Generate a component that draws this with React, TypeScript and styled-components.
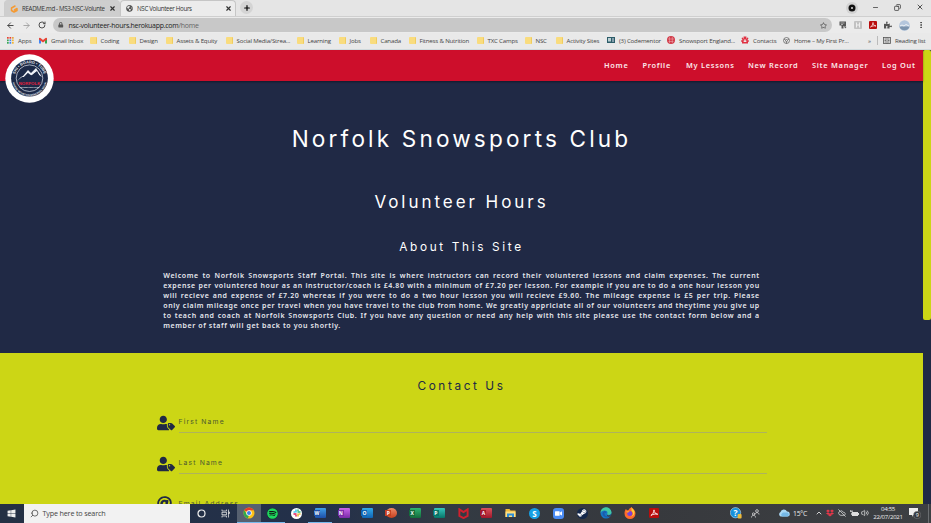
import React from 'react';
import styled, { createGlobalStyle } from 'styled-components';
import {
  FaUserTag, FaAt, FaWindows, FaSteamSymbol, FaRegStar, FaPuzzlePiece, FaLock,
  FaDropbox, FaVideo, FaGlobeAmericas, FaSpotify,
} from 'react-icons/fa';
import {
  ArrowLeft, ArrowRight, RotateCw, X, Plus, Minus, Search, ChevronUp, Volume2, CloudOff, EllipsisVertical, Copy,
} from 'lucide-react';

const navy = '#202945';
const red = '#cd0e2b';
const lime = '#ccd615';

const Global = createGlobalStyle`
  * { box-sizing: border-box; }
  body { margin: 0; overflow: hidden; }
  svg { display: block; flex: none; }
`;

const Screen = styled.div`
  width: 931px;
  height: 523px;
  display: flex;
  flex-direction: column;
  overflow: hidden;
  font-family: 'Open Sans', 'Noto Sans', sans-serif;
`;

/* ---------- Browser frame ---------- */
const TabStrip = styled.div`
  height: 17px;
  flex: none;
  display: flex;
  align-items: flex-end;
  padding-left: 4px;
  background: #e5e5e5;
  border-bottom: 1px solid #cfcfcf;
`;
const Tab = styled.div<{ $active?: boolean }>`
  width: 116px;
  height: 16px;
  display: flex;
  align-items: center;
  gap: 4px;
  padding: 0 3px 0 5px;
  border-radius: 4px 4px 0 0;
  border: 1px solid ${p => (p.$active ? '#c6c6c6' : '#cdcdcd')};
  border-bottom: 0;
  background: ${p => (p.$active ? '#ececec' : '#cecece')};
  color: #333;
`;
const TabTitle = styled.span`
  flex: 1;
  font-size: 6.2px;
  letter-spacing: -0.33px;
  white-space: nowrap;
  overflow: hidden;
`;
const NewTab = styled.div`
  width: 13px;
  height: 13px;
  margin: 0 0 2px 4px;
  border-radius: 50%;
  background: #d4d4d4;
  display: grid;
  place-items: center;
`;
const WindowControls = styled.div`
  margin-left: auto;
  height: 16px;
  display: flex;
  align-items: center;
  padding: 0 7px 2px 0;
  gap: 15px;
  color: #333;
`;
const Recorder = styled.div`
  width: 12px;
  height: 12px;
  border-radius: 50%;
  background: #d2d2d2;
  display: grid;
  place-items: center;
  margin-right: -1px;
  margin-top: 2px;
`;
const Toolbar = styled.div`
  height: 16px;
  flex: none;
  display: flex;
  align-items: center;
  background: #ebebeb;
  padding: 0 6px 0 6px;
  color: #444;
`;
const NavButtons = styled.div`
  display: flex;
  gap: 7px;
  width: 47px;
`;
const AddressBar = styled.div`
  width: 779px;
  height: 14px;
  border-radius: 7px;
  background: #c8c8c8;
  display: flex;
  align-items: center;
  padding: 0 5px 0 5px;
  gap: 5px;
  font-size: 7px;
  color: #222;
`;
const Url = styled.span`
  flex: 1;
  letter-spacing: -0.28px;
  em { font-style: normal; color: #666; }
`;
const Extensions = styled.div`
  flex: 1;
  display: flex;
  align-items: center;
  justify-content: space-between;
  padding-left: 7px;
`;
const Bookmarks = styled.div`
  height: 17px;
  flex: none;
  display: flex;
  align-items: center;
  padding: 0 0 1.5px 7px;
  background: #e9e9e9;
  border-bottom: 1px solid #d0dadd;
`;
const Bookmark = styled.div<{ $w: number }>`
  width: ${p => p.$w}px;
  flex: none;
  display: flex;
  align-items: center;
  gap: 4px;
  font-size: 6.1px;
  letter-spacing: -0.18px;
  color: #444;
  white-space: nowrap;
`;
const Folder = styled.i`
  width: 6.5px;
  height: 7px;
  border-radius: 1px;
  background: #f9dc7e;
  border-right: 1px solid #f0cc5e;
`;
const Divider = styled.i`
  width: 1px;
  height: 9px;
  background: #bbb;
  margin-right: 5px;
`;

/* ---------- Web page ---------- */
const Viewport = styled.div`
  height: 453.5px;
  flex: none;
  display: flex;
  overflow: hidden;
`;
const Page = styled.main`
  width: 923px;
  display: flex;
  flex-direction: column;
`;
const Scrollbar = styled.div`
  width: 8px;
  background: ${navy};
`;
const Thumb = styled.div`
  height: 270px;
  border-radius: 2px;
  background: ${lime};
`;
const Header = styled.header`
  position: relative;
  height: 31px;
  flex: none;
  background: ${red};
  box-shadow: 0 1px 2px rgba(0, 0, 0, 0.4);
`;
const Badge = styled.div`
  position: absolute;
  left: 4.5px;
  top: 4px;
`;
const Menu = styled.nav`
  height: 30px;
  display: flex;
  align-items: center;
  padding-left: 604px;
  font-family: 'Noto Sans', sans-serif;
  font-weight: 600;
  font-size: 7.4px;
  letter-spacing: 0.72px;
  color: #fbe9ec;
`;
const MenuItem = styled.a<{ $w: number }>`
  width: ${p => p.$w}px;
  flex: none;
  white-space: nowrap;
`;
const Hero = styled.section`
  height: 272.3px;
  flex: none;
  background: ${navy};
  color: #fff;
  display: flex;
  flex-direction: column;
  align-items: center;
`;
const Heading = styled.h1<{ $size: number; $ls: number; $h: number; $top?: number }>`
  margin: ${p => p.$top ?? 0}px 0 0;
  height: ${p => p.$h}px;
  flex: none;
  line-height: ${p => p.$h}px;
  font-family: Inter, sans-serif;
  font-weight: 400;
  font-size: ${p => p.$size}px;
  letter-spacing: ${p => p.$ls}px;
  white-space: nowrap;
`;
const About = styled.div`
  width: 596.5px;
  margin-top: 14px;
  font-family: 'Noto Sans', sans-serif;
  font-size: 7px;
  font-weight: 600;
  letter-spacing: 0.6px;
  color: #e6e8ee;
`;
const Line = styled.div<{ $last?: boolean }>`
  height: 10.2px;
  line-height: 10.2px;
  white-space: nowrap;
  text-align: justify;
  text-align-last: ${p => (p.$last ? 'left' : 'justify')};
`;
const Contact = styled.section`
  flex: 1;
  background: ${lime};
  color: ${navy};
  display: flex;
  flex-direction: column;
  align-items: center;
`;
const Fields = styled.form`
  margin: 13.2px 0 0;
`;
const Field = styled.label`
  width: 610px;
  height: 40.7px;
  display: flex;
  gap: 4px;
`;
const FieldIcon = styled.span`
  width: 18px;
  padding-top: 5px;
`;
const FieldInput = styled.span`
  flex: 1;
  height: 24px;
  line-height: 25px;
  border-bottom: 1px solid #aeb35c;
  font-family: Inter, sans-serif;
  font-size: 6.8px;
  letter-spacing: 1.15px;
  color: #4d5a30;
`;

/* ---------- Taskbar ---------- */
const Taskbar = styled.footer`
  flex: 1;
  display: flex;
  align-items: stretch;
  background: linear-gradient(90deg, #243044, #23304a 35%, #333a43 48%, #37393d 70%, #3d4043);
  color: #eee;
`;
const Start = styled.div`
  width: 23.5px;
  display: grid;
  place-items: center;
`;
const SearchBox = styled.div`
  width: 166px;
  background: #f2f2f2;
  color: #444;
  display: flex;
  align-items: center;
  gap: 4px;
  padding-left: 6px;
  font-size: 7.2px;
  letter-spacing: -0.17px;
`;
const TaskButton = styled.div<{ $open?: boolean; $focus?: boolean }>`
  width: 23.8px;
  flex: none;
  display: grid;
  place-items: center;
  background: ${p => (p.$focus ? '#566070' : 'transparent')};
  box-shadow: ${p => (p.$open ? 'inset 0 -1px 0 #76b9ed' : 'none')};
`;
const OfficeTile = styled.div<{ $c: string; $d: string; $round?: boolean }>`
  width: 11px;
  height: 10px;
  border-radius: ${p => (p.$round ? '50%' : '1px')};
  background: linear-gradient(180deg, ${p => p.$c}, ${p => p.$d});
  display: flex;
  align-items: center;
`;
const OfficeLetter = styled.span<{ $d: string }>`
  width: 6px;
  height: 6px;
  margin-left: -1px;
  background: ${p => p.$d};
  color: #fff;
  font-size: 5px;
  font-weight: 700;
  line-height: 6px;
  text-align: center;
`;
const Disc = styled.div<{ $bg: string; $r?: string }>`
  width: 11px;
  height: 11px;
  border-radius: ${p => p.$r ?? '50%'};
  background: ${p => p.$bg};
  display: grid;
  place-items: center;
  color: #fff;
  font-size: 8px;
  font-weight: 700;
  line-height: 11px;
`;
const Tray = styled.div`
  margin-left: auto;
  display: flex;
  align-items: center;
  width: 202px;
`;
const TrayItem = styled.div<{ $w: number; $ml?: number }>`
  width: ${p => p.$w}px;
  margin-left: ${p => p.$ml ?? 0}px;
  flex: none;
  display: grid;
  place-items: center;
  font-size: 6.8px;
  letter-spacing: -0.2px;
`;
const Clock = styled.div`
  width: 36px;
  display: flex;
  flex-direction: column;
  align-items: center;
  font-size: 6.1px;
  line-height: 8.6px;
  letter-spacing: -0.28px;
`;
const ShowDesktop = styled.i`
  width: 1px;
  height: 100%;
  background: #6b6e71;
  margin-left: 4px;
`;

const ClubLogo = () => (
  <svg width="49" height="49" viewBox="0 0 49 49">
    <defs>
      <path id="arcTop" d="M9.6 24.2a14.9 14.9 0 0 1 29.8 0" />
      <path id="arcBottom" d="M7.3 25.2a17.2 16.8 0 0 0 34.4 0" />
    </defs>
    <circle cx="24.5" cy="24.5" r="24.2" fill="#fff" />
    <circle cx="24.5" cy="24.2" r="18.4" fill="#1d2a48" />
    <circle cx="24.5" cy="24.2" r="13.3" fill="none" stroke="#c8cfda" strokeWidth=".8" />
    <g fill="#e8ebf0" fontFamily="Liberation Sans, sans-serif" fontWeight="700">
      <text fontSize="3.9"><textPath href="#arcTop" startOffset="50%" textAnchor="middle">SKI • BOARD • TUBE</textPath></text>
      <text fontSize="2.5"><textPath href="#arcBottom" startOffset="50%" textAnchor="middle">WHERE MOUNTAIN MEMORIES BEGIN</textPath></text>
      <text x="24.5" y="33.6" fontSize="1.9" textAnchor="middle">SNOWSPORTS CLUB</text>
    </g>
    <path d="M12 27l4-4 2-1 5-6 3 3 5-5 6 9-3-2-2-3-2 1-3 3-4-3-4 4-2 0z" fill="#eef1f6" />
    <path d="M18 24l5-5 1 3 3-1 5-4 3 6z" fill="#1d2a48" />
    <text x="24.5" y="31" fontSize="4.4" fontWeight="700" fill="#e0203c" textAnchor="middle" fontFamily="Liberation Sans, sans-serif">NORFOLK</text>
  </svg>
);

const GitpodIcon = () => (
  <svg width="8" height="8" viewBox="0 0 16 16" fill="none" stroke="#f59a32" strokeWidth="3" strokeLinejoin="round" strokeLinecap="round">
    <path d="M10 2L3 6v5l5 3 6-3V7L9 10" />
  </svg>
);
const AppsGrid = () => (
  <svg width="7" height="7" viewBox="0 0 7 7">
    {['#e54335', '#e54335', '#e8a23a', '#34a853', '#4285f4', '#f2b632', '#34a853', '#4285f4', '#f2b632'].map((c, i) => (
      <rect key={i} x={(i % 3) * 2.5} y={Math.floor(i / 3) * 2.5} width="1.7" height="1.7" fill={c} />
    ))}
  </svg>
);
const Gmail = () => (
  <svg width="8" height="7" viewBox="0 0 16 12">
    <path d="M0 1v11h4V5z" fill="#4285f4" /><path d="M16 1v11h-4V5z" fill="#34a853" />
    <path d="M0 1.5Q1-.5 3 1l5 4 5-4q2-1.5 3 .5V4L8 10 0 4z" fill="#ea4335" />
  </svg>
);
const CodementorIcon = () => (
  <svg width="8" height="6" viewBox="0 0 8 6"><rect width="8" height="6" fill="#2d5d69" /><rect x="1" y="1" width="3" height="3.5" fill="#bcd0d4" /><path d="M5 2h2M5 4h2" stroke="#dde" /></svg>
);
const EnglandIcon = () => (
  <svg width="8" height="8" viewBox="0 0 8 8"><circle cx="4" cy="4" r="4" fill="#d23a48" /><path d="M1 3h6M1.5 5.5h5M2.5 1v6M5.3 1v6" stroke="#f0b5ba" strokeWidth=".5" /></svg>
);
const ContactsIcon = () => (
  <svg width="8" height="8" viewBox="0 0 16 16" fill="#e03142">
    <path d="M5 1h3v6H6zM11 1H8v6h2zM1 4l3-1 3 6-3 1zM15 4l-3-1-3 6 3 1zM0 9l3-1 3 4H1zM16 9l-3-1-3 4h5z" />
    <path d="M2 12h12v3H2z" />
  </svg>
);
const HomeSiteIcon = () => (
  <svg width="7" height="7" viewBox="0 0 14 14" fill="none" stroke="#666" strokeWidth="1.6"><circle cx="7" cy="7" r="6" /><circle cx="7" cy="7" r="2" /><path d="M2 4l3 2M12 4L9 6M7 9v4" /></svg>
);
const ReadingIcon = () => (
  <svg width="8" height="7" viewBox="0 0 16 14" fill="none" stroke="#555" strokeWidth="1.6"><rect x="1" y="1" width="14" height="12" /><path d="M8 1v12M3 4h3M3 7h3M3 10h3M10 4h3M10 7h3M10 10h3" /></svg>
);
const AcrobatIcon = ({ s }: { s: number }) => (
  <svg width={s} height={s} viewBox="0 0 16 16"><rect width="16" height="16" rx="2" fill="#b90d0d" /><path d="M3 12c2-1 5-5 5-9 0 4 2 6 6 7-4-1-8 0-11 2z" fill="none" stroke="#fff" strokeWidth="1.4" /></svg>
);
const ChromeIcon = () => (
  <svg width="12" height="12" viewBox="0 0 24 24">
    <circle cx="12" cy="12" r="11" fill="#fbc116" />
    <path d="M12 12L2.5 6.5A11 11 0 0 1 21.6 6.5H12z" fill="#e33b2e" />
    <path d="M2.5 6.5L8 15l4 2-2.5 5.8A11 11 0 0 1 2.5 6.5z" fill="#2da94f" />
    <circle cx="12" cy="12" r="5.4" fill="#fff" /><circle cx="12" cy="12" r="4.1" fill="#3f7ee8" />
  </svg>
);
const SlackIcon = () => (
  <svg width="8" height="8" viewBox="0 0 16 16" strokeWidth="3" strokeLinecap="round">
    <path d="M6 2v4M2 6h1" stroke="#36c5f0" /><path d="M10 6h4M10 2v1" stroke="#2eb67d" />
    <path d="M10 10v4M13 10h1" stroke="#ecb22e" /><path d="M2 10h4M6 13v1" stroke="#e01e5a" />
  </svg>
);
const TaskViewIcon = () => (
  <svg width="9" height="9" viewBox="0 0 18 18" fill="none" stroke="#e5e5e5" strokeWidth="1.5"><path d="M2 1v3h9V1M2 17v-3h9v3M15 1v16" /><rect x="2" y="6.5" width="9" height="5" /><path d="M14 6h3v3h-3" /></svg>
);
const McAfeeIcon = () => (
  <svg width="11" height="11" viewBox="0 0 16 16"><path d="M2 2l6 4 6-4v9.500l-6 3.200-6-3.200z" fill="none" stroke="#d0202e" strokeWidth="2.8" /></svg>
);
const ExplorerIcon = () => (
  <svg width="11" height="10" viewBox="0 0 22 20"><path d="M1 2h8l2 3h10v13H1z" fill="#f0b93c" /><path d="M1 7h20v11H1z" fill="#ffdf80" /><path d="M4 18v-7h14v7h-4v-3H8v3z" fill="#2f8fd8" /></svg>
);
const EdgeIcon = () => (
  <svg width="12" height="12" viewBox="0 0 24 24">
    <circle cx="12" cy="12" r="11" fill="#1677c5" />
    <path d="M1 12A11 11 0 0 1 23 11c0 5-8 6-9 3 3-4-1-7-5-7-4 0-7 2-8 5z" fill="#42c7a4" />
    <path d="M9 11c-1 5 3 9 10 8-5 4-14 1-14-6 0-2 2-4 4-5 3 0 4 2 3 4-1 0-2-1-3-1z" fill="#1d5ba8" />
    <path d="M14 15c2 3 6 2 9-1l-3 5c-4 1-7-1-6-4z" fill="#383a3f" />
  </svg>
);
const FirefoxIcon = () => (
  <svg width="12" height="12" viewBox="0 0 24 24">
    <path d="M12 2c3-1 2-2 3-2 1 3 8 5 8 13a11 11 0 0 1-22 0c0-4 1-7 3-9l2 3 3-1z" fill="#ff6a2b" />
    <path d="M15 0c1 4 6 5 6 11 0 5-4 8-8 8 7-2 6-8 2-11z" fill="#ffcf38" />
    <circle cx="11.5" cy="13" r="5" fill="#7a43d6" /><path d="M4 8c3-1 6 0 8 2-3 0-4 2-6 1z" fill="#ff9a2e" />
  </svg>
);
const HelpIcon = () => (
  <svg width="12" height="12" viewBox="0 0 12 12"><circle cx="5.5" cy="5.7" r="5.2" fill="#1991db" stroke="#d9edf8" strokeWidth=".5" /><text x="5.4" y="8.8" fontSize="8.5" fontWeight="700" fill="#fff" textAnchor="middle" fontFamily="Open Sans, sans-serif">?</text><rect x="7.6" y="7" width="4" height="4.6" rx="1" fill="#edbb3c" /></svg>
);
const PeopleIcon = () => (
  <svg width="9" height="9" viewBox="0 0 18 18" fill="none" stroke="#ddd" strokeWidth="1.5"><circle cx="12" cy="4" r="2.7" /><path d="M8 11c0-5 8-5 8 0" /><circle cx="5" cy="10" r="2.3" /><path d="M1 17c0-6 8-6 8 0" /></svg>
);
const WeatherIcon = () => (
  <svg width="12" height="8" viewBox="0 0 24 16"><path d="M5 15a5 5 0 0 1 0-9 7 7 0 0 1 13-1 5 5 0 0 1 1 10z" fill="#a9d8f5" /><path d="M8 15a5 5 0 0 1 2-8l9 0a4.500 4.500 0 0 1 0 8z" fill="#75b8e6" /></svg>
);
const BatteryIcon = () => (
  <svg width="9" height="7" viewBox="0 0 18 14"><path d="M4 4h12v2h2v4h-2v2H4z" fill="#ddd" /><path d="M1 0v3M4 0v3M0 3h5v3H3v4" stroke="#ddd" fill="none" strokeWidth="1.4" /></svg>
);
const NoticeIcon = () => (
  <svg width="12" height="12" viewBox="0 0 12 12"><path d="M0 1h9v7H4L3 10V8H0z" fill="#eee" /><circle cx="8.2" cy="8" r="3.7" fill="#34373b" stroke="#999" strokeWidth=".4" /><text x="8.2" y="10" fontSize="5.5" fill="#fff" textAnchor="middle" fontFamily="Open Sans, sans-serif">9</text></svg>
);
const NoteExtension = () => (
  <svg width="8" height="8" viewBox="0 0 16 16"><path d="M1 1h13v9H9v5H5V9H1z" fill="#555" /><path d="M3 4h8M4 7h4" stroke="#ddd" strokeWidth="1.3" /><path d="M10 9l5 3-3 3z" fill="#555" /></svg>
);
const HoneyExtension = () => (
  <svg width="8" height="8" viewBox="0 0 16 16"><rect width="16" height="16" rx="2" fill="#c2c2c2" /><path d="M5 3v10M5 8h6M11 3v10" stroke="#eee" strokeWidth="2" /></svg>
);
const Avatar = () => (
  <svg width="11" height="11" viewBox="0 0 11 11"><circle cx="5.5" cy="5.5" r="5.3" fill="#b4c6dc" /><path d="M.5 6.500h10a5.200 5.200 0 0 1-10 0z" fill="#7c94ae" /><path d="M1 6l2-1 2 1 2-1.500L10 6" stroke="#eef2f6" fill="none" /></svg>
);

const folders: [string, number][] = [
  ['Coding', 39], ['Design', 37], ['Assets & Equity', 60], ['Social Media/Strea...', 71], ['Learning', 42],
  ['Jobs', 31], ['Canada', 39], ['Fitness & Nutrition', 68], ['TXC Camps', 48], ['NSC', 31], ['Activity Sites', 51],
];
const menu: [string, number][] = [
  ['Home', 38.5], ['Profile', 43.5], ['My Lessons', 62], ['New Record', 64], ['Site Manager', 70], ['Log Out', 40],
];
const about = [
  'Welcome to Norfolk Snowsports Staff Portal. This site is where instructors can record their voluntered lessons and claim expenses. The current',
  'expense per voluntered hour as an instructor/coach is £4.80 with a minimum of £7.20 per lesson. For example if you are to do a one hour lesson you',
  'will recieve and expense of £7.20 whereas if you were to do a two hour lesson you will recieve £9.60. The mileage expense is £5 per trip. Please',
  'only claim mileage once per travel when you have travel to the club from home. We greatly appriciate all of our volunteers and theytime you give up',
  'to teach and coach at Norfolk Snowsports Club. If you have any question or need any help with this site please use the contact form below and a',
  'member of staff will get back to you shortly.',
];

const Office = ({ l, c, d, round }: { l: string; c: string; d: string; round?: boolean }) => (
  <TaskButton $open={l === 'W'}>
    <OfficeTile $c={c} $d={d} $round={round}><OfficeLetter $d={d}>{l}</OfficeLetter></OfficeTile>
  </TaskButton>
);

export default function App() {
  return (
    <Screen>
      <Global />
      <TabStrip>
        <Tab><GitpodIcon /><TabTitle>README.md - MS3-NSC-Volunte</TabTitle><X size={7} strokeWidth={4} /></Tab>
        <Tab $active><FaGlobeAmericas size={7} color="#555" /><TabTitle>NSC Volunteer Hours</TabTitle><X size={7} strokeWidth={4} /></Tab>
        <NewTab><Plus size={8} strokeWidth={3.5} /></NewTab>
        <WindowControls>
          <Recorder><svg width="8" height="8" viewBox="0 0 8 8"><circle cx="4" cy="4" r="3.5" fill="#111" /><circle cx="4" cy="4" r="1" fill="#ddd" /></svg></Recorder>
          <Minus size={7} strokeWidth={2.5} /><Copy size={7} strokeWidth={2.5} transform="scale(-1 1)" /><X size={8} strokeWidth={2.5} />
        </WindowControls>
      </TabStrip>
      <Toolbar>
        <NavButtons><ArrowLeft size={9} strokeWidth={2.6} /><ArrowRight size={9} strokeWidth={2.2} color="#999" /><RotateCw size={8} strokeWidth={2.8} /></NavButtons>
        <AddressBar><FaLock size={5.5} color="#555" /><Url>nsc-volunteer-hours.herokuapp.com<em>/home</em></Url><FaRegStar size={7} color="#555" /></AddressBar>
        <Extensions><NoteExtension /><HoneyExtension /><AcrobatIcon s={8} /><FaPuzzlePiece size={8} color="#555" /><Avatar /><EllipsisVertical size={8} strokeWidth={3} /></Extensions>
      </Toolbar>
      <Bookmarks>
        <Bookmark $w={32}><AppsGrid />Apps</Bookmark>
        <Bookmark $w={51}><Gmail />Gmail Inbox</Bookmark>
        {folders.map(([t, w]) => <Bookmark key={t} $w={w}><Folder />{t}</Bookmark>)}
        <Bookmark $w={60}><CodementorIcon />(3) Codementor</Bookmark>
        <Bookmark $w={74}><EnglandIcon />Snowsport England...</Bookmark>
        <Bookmark $w={42}><ContactsIcon />Contacts</Bookmark>
        <Bookmark $w={85}><HomeSiteIcon />Home – My First Pr...</Bookmark>
        <Bookmark $w={9}>»</Bookmark>
        <Divider />
        <Bookmark $w={45}><ReadingIcon />Reading list</Bookmark>
      </Bookmarks>

      <Viewport>
        <Page>
          <Header>
            <Menu>{menu.map(([t, w]) => <MenuItem key={t} $w={w}>{t}</MenuItem>)}</Menu>
            <Badge><ClubLogo /></Badge>
          </Header>
          <Hero>
            <Heading $size={22.6} $ls={3.15} $h={36} $top={40}>Norfolk Snowsports Club</Heading>
            <Heading as="h2" $size={17} $ls={2.95} $h={30} $top={30}>Volunteer Hours</Heading>
            <Heading as="h3" $size={11.8} $ls={2.65} $h={20} $top={19.5}>About This Site</Heading>
            <About>{about.map((t, i) => <Line key={i} $last={i === about.length - 1}>{t}</Line>)}</About>
          </Hero>
          <Contact>
            <Heading as="h2" $size={11.8} $ls={2.6} $h={20} $top={23}>Contact Us</Heading>
            <Fields>
              <Field><FieldIcon><FaUserTag size={18} /></FieldIcon><FieldInput>First Name</FieldInput></Field>
              <Field><FieldIcon><FaUserTag size={18} /></FieldIcon><FieldInput>Last Name</FieldInput></Field>
              <Field><FieldIcon><FaAt size={15} /></FieldIcon><FieldInput>Email Address</FieldInput></Field>
            </Fields>
          </Contact>
        </Page>
        <Scrollbar><Thumb /></Scrollbar>
      </Viewport>

      <Taskbar>
        <Start><FaWindows size={9} /></Start>
        <SearchBox><Search size={9} strokeWidth={2} transform="scale(-1 1)" />Type here to search</SearchBox>
        <TaskButton><svg width="9" height="9" viewBox="0 0 9 9"><circle cx="4.5" cy="4.5" r="3.5" fill="none" stroke="#eee" strokeWidth="1.2" /></svg></TaskButton>
        <TaskButton><TaskViewIcon /></TaskButton>
        <TaskButton $open $focus><ChromeIcon /></TaskButton>
        <TaskButton $open><Disc $bg="#111"><FaSpotify size={11} color="#1ed760" /></Disc></TaskButton>
        <TaskButton><Disc $bg="#fff"><SlackIcon /></Disc></TaskButton>
        <Office l="W" c="#41a0e8" d="#1d4fa8" />
        <Office l="N" c="#ca64ea" d="#7a2ba8" />
        <Office l="O" c="#32a9e8" d="#0f64b5" />
        <Office l="P" c="#f08a66" d="#c6401f" round />
        <Office l="X" c="#2eb472" d="#146c3b" />
        <Office l="P" c="#36c6bd" d="#077568" />
        <TaskButton><McAfeeIcon /></TaskButton>
        <Office l="A" c="#d9525b" d="#a2172b" />
        <TaskButton><ExplorerIcon /></TaskButton>
        <TaskButton><Disc $bg="#159fe3">S</Disc></TaskButton>
        <TaskButton><Disc $bg="#4a8cf4" $r="3px"><FaVideo size={7} /></Disc></TaskButton>
        <TaskButton><Disc $bg="#14284b"><FaSteamSymbol size={10} /></Disc></TaskButton>
        <TaskButton><EdgeIcon /></TaskButton>
        <TaskButton><FirefoxIcon /></TaskButton>
        <TaskButton><AcrobatIcon s={10} /></TaskButton>
        <Tray>
          <TrayItem $w={13}><HelpIcon /></TrayItem>
          <TrayItem $w={26}><PeopleIcon /></TrayItem>
          <TrayItem $w={12} $ml={10}><WeatherIcon /></TrayItem>
          <TrayItem $w={14} $ml={3}>15°C</TrayItem>
          <TrayItem $w={8} $ml={8}><ChevronUp size={8} strokeWidth={2.5} /></TrayItem>
          <TrayItem $w={12} $ml={1}><FaDropbox size={8} color="#e8374a" /></TrayItem>
          <TrayItem $w={12}><CloudOff size={8} /></TrayItem>
          <TrayItem $w={12}><BatteryIcon /></TrayItem>
          <TrayItem $w={10}><Volume2 size={8} /></TrayItem>
          <Clock><span>04:55</span><span>22/07/2021</span></Clock>
          <TrayItem $w={18}><NoticeIcon /></TrayItem>
          <ShowDesktop />
        </Tray>
      </Taskbar>
    </Screen>
  );
}
